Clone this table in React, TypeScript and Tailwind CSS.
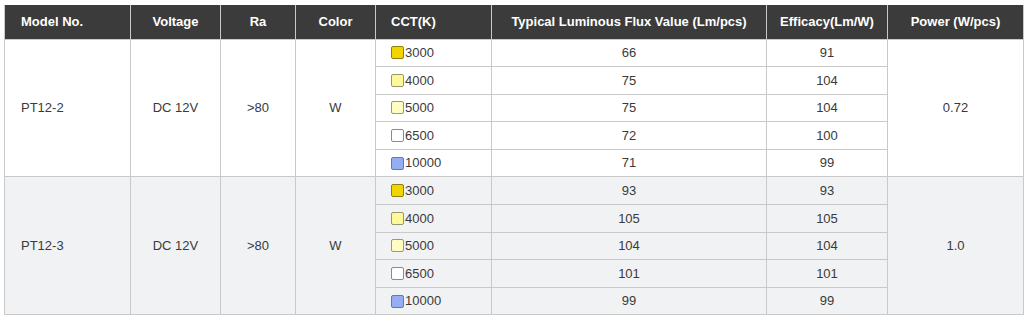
import React from "react";

const sw = [
  { cct: "3000", swatch: "bg-[#f2d500]", border: "border-[#8f7f10]" },
  { cct: "4000", swatch: "bg-[#fbf99a]", border: "border-[#9a9470]" },
  { cct: "5000", swatch: "bg-[#fffdc2]", border: "border-[#9a9680]" },
  { cct: "6500", swatch: "bg-white", border: "border-[#8a8a8a]" },
  { cct: "10000", swatch: "bg-[#94adf3]", border: "border-[#6b7897]" },
];

const groups = [
  {
    model: "PT12-2",
    power: "0.72",
    bg: "bg-white",
    flux: ["66", "75", "75", "72", "71"],
    eff: ["91", "104", "104", "100", "99"],
  },
  {
    model: "PT12-3",
    power: "1.0",
    bg: "bg-[#f1f2f4]",
    flux: ["93", "105", "104", "101", "99"],
    eff: ["93", "105", "104", "101", "99"],
  },
];

const th = "bg-[#3b3b3b] text-white font-bold text-[13px] border-x border-[#c9c9c9] h-[34px] align-middle";
const td = "border border-[#c9c9c9] text-[13px] text-[#3a3a3a] align-middle text-center";

export default function App() {
  return (
    <div className="w-[1030px] h-[324px] bg-white pt-[5px] pl-[4px]" style={{ fontFamily: '"Liberation Sans", Arial, sans-serif' }}>
      <table className="border-collapse table-fixed w-[1019px]">
        <colgroup>
          <col className="w-[126px]" />
          <col className="w-[90px]" />
          <col className="w-[75px]" />
          <col className="w-[80px]" />
          <col className="w-[116px]" />
          <col className="w-[275px]" />
          <col className="w-[121px]" />
          <col className="w-[136px]" />
        </colgroup>
        <thead>
          <tr>
            <th className={`${th} text-left pl-[16px]`}>Model No.</th>
            <th className={`${th} text-center`}>Voltage</th>
            <th className={`${th} text-center`}>Ra</th>
            <th className={`${th} text-center`}>Color</th>
            <th className={`${th} text-left pl-[15px]`}>CCT(K)</th>
            <th className={`${th} text-center`}>Typical Luminous Flux Value (Lm/pcs)</th>
            <th className={`${th} text-center`}>Efficacy(Lm/W)</th>
            <th className={`${th} text-center`}>Power (W/pcs)</th>
          </tr>
        </thead>
        <tbody>
          {groups.map((g) =>
            sw.map((s, i) => (
              <tr key={g.model + s.cct} className={`${g.bg} h-[27.6px]`}>
                {i === 0 && (
                  <>
                    <td rowSpan={5} className={`${td} text-left pl-[16px]`}>{g.model}</td>
                    <td rowSpan={5} className={td}>DC 12V</td>
                    <td rowSpan={5} className={td}>&gt;80</td>
                    <td rowSpan={5} className={td}>W</td>
                  </>
                )}
                <td className={`${td} text-left pl-[15px]`}>
                  <div className="flex items-center">
                    <span className={`inline-block w-[13px] h-[13px] rounded-[2px] border ${s.swatch} ${s.border}`} />
                    <span className="ml-[1px]">{s.cct}</span>
                  </div>
                </td>
                <td className={td}>{g.flux[i]}</td>
                <td className={td}>{g.eff[i]}</td>
                {i === 0 && (
                  <td rowSpan={5} className={td}>{g.power}</td>
                )}
              </tr>
            ))
          )}
        </tbody>
      </table>
    </div>
  );
}
